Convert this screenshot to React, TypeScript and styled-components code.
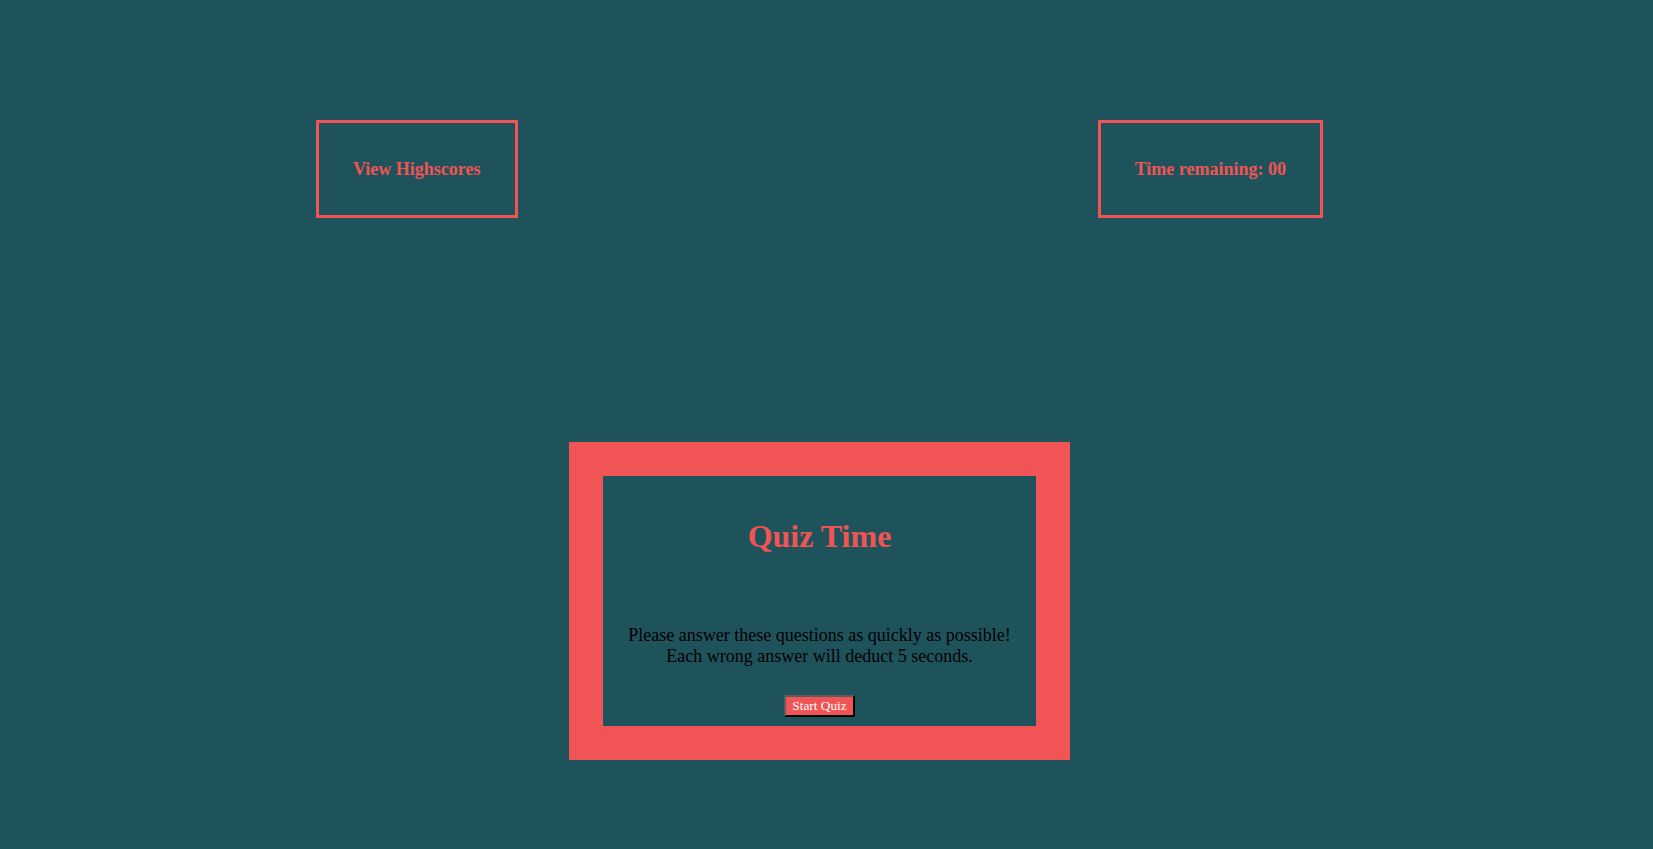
import React from "react";
import styled, { createGlobalStyle } from "styled-components";

const TEAL = "#1f535c";
const RED = "#f05454";

const GlobalStyle = createGlobalStyle`
  html, body {
    margin: 0;
    padding: 0;
    background: ${TEAL};
  }
  body {
    font-family: "Liberation Serif", "Times New Roman", serif;
  }
`;

const Page = styled.div`
  display: flex;
  flex-direction: column;
  padding-top: 120px;
`;

const Header = styled.header`
  display: flex;
  justify-content: space-between;
  align-items: flex-start;
  padding: 0 330px 0 316px;
`;

const HeaderBox = styled.div`
  border: 3px solid ${RED};
  padding: 36px 34px 35px;
  color: ${RED};
  font-weight: bold;
  font-size: 18px;
  line-height: 21px;
  white-space: nowrap;
  cursor: pointer;
`;

const Main = styled.main`
  display: flex;
  padding-left: 569px;
  margin-top: 224px;
`;

const Card = styled.section`
  background: ${RED};
  padding: 34px;
`;

const CardInner = styled.div`
  width: 433px;
  height: 250px;
  box-sizing: border-box;
  background: ${TEAL};
  display: flex;
  flex-direction: column;
  align-items: center;
  padding-top: 42px;
  text-align: center;
`;

const Title = styled.h1`
  margin: 0 0 70px;
  font-size: 32px;
  font-weight: bold;
  color: ${RED};
  line-height: normal;
`;

const Intro = styled.p`
  margin: 0 0 28px;
  font-size: 18px;
  line-height: normal;
  color: #000;
`;

const StartButton = styled.button`
  font-family: "Liberation Serif", "Times New Roman", serif;
  font-size: 13.33px;
  line-height: normal;
  background: ${RED};
  color: #fff;
  padding: 1px 6px;
  border-style: solid;
  border-width: 2px;
  border-color: #5c5c5c #000 #000 #5c5c5c;
  cursor: pointer;
`;

export default function App() {
  return (
    <>
      <GlobalStyle />
      <Page>
        <Header>
          <HeaderBox>View Highscores</HeaderBox>
          <HeaderBox>Time remaining: 00</HeaderBox>
        </Header>
        <Main>
          <Card>
            <CardInner>
              <Title>Quiz Time</Title>
              <Intro>
                Please answer these questions as quickly as possible!
                <br />
                Each wrong answer will deduct 5 seconds.
              </Intro>
              <StartButton>Start Quiz</StartButton>
            </CardInner>
          </Card>
        </Main>
      </Page>
    </>
  );
}
